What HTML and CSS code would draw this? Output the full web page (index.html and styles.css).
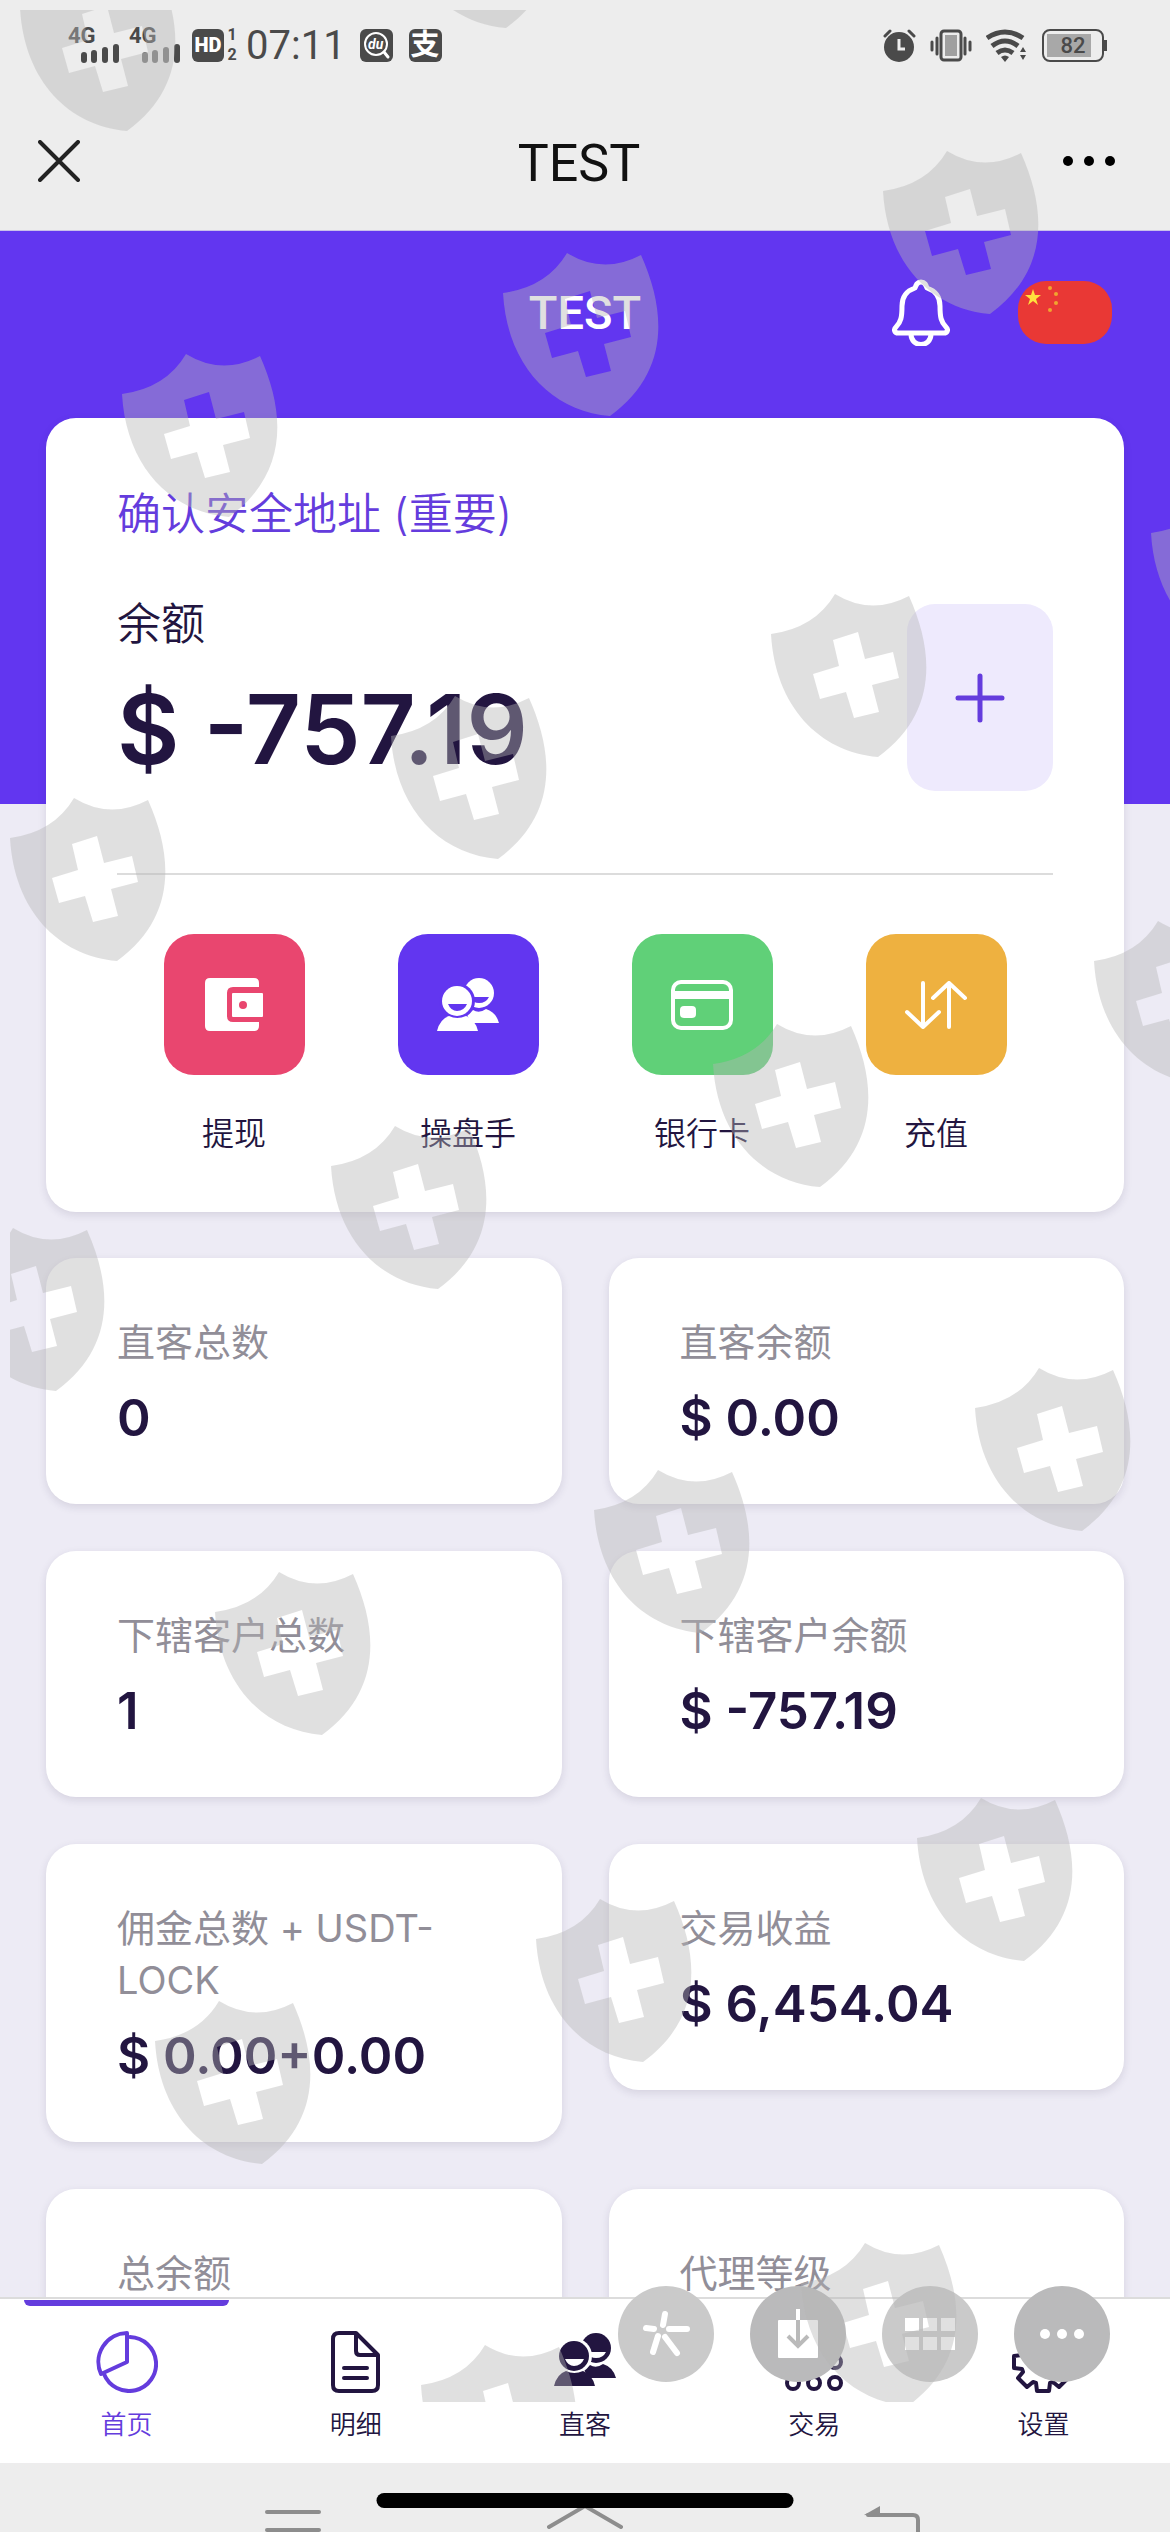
FILE: index.html
```html
<!DOCTYPE html>
<html lang="zh-CN">
<head>
    <meta charset="UTF-8">
    <meta name="viewport" content="width=device-width, initial-scale=1.0">
    <title>TEST</title>
    <link rel="stylesheet" href="styles.css">
</head>
<body>

    <!-- Shared shapes -->
    <svg class="defs" aria-hidden="true">
        <symbol id="people" viewBox="0 0 62 53">
            <circle cx="42" cy="15" r="15" fill="currentColor" />
            <path class="cut" d="M32 19H52Q49 25 42 25Q36 25 32 19Z" />
            <path fill="currentColor" d="M34 45Q32 40 30 37L36 32Q42 36 49 31Q59 34 62 45Z" />
            <circle class="cut" cx="20" cy="23" r="18" />
            <circle cx="20" cy="23" r="15" fill="currentColor" />
            <path class="cut" d="M11 26H30Q27 33 20 33Q14 33 11 26Z" />
            <path fill="currentColor" d="M0 53Q3 41 12 38Q20 42 29 38Q38 41 41 53Z" />
        </symbol>
        <symbol id="shield" viewBox="0 0 160 164">
            <path fill-rule="evenodd" d="M0 40Q44 34 64 0Q100 22 138 2C164 60 166 120 107 163C48 158 4 112 0 40ZM62 46L87 38L94 65L122 58L128 84L101 91L108 118L83 124L75 98L49 105L42 80L68 72Z" />
        </symbol>
    </svg>

    <div class="phone">
        <!-- System status bar -->
        <div class="status-bar">
            <div class="status-left">
                <span class="signal">4G
                    <svg width="39" height="19" viewBox="0 0 39 19"><path d="M3 11V16M13 9V16M24 6V16M35 3V16" /></svg>
                </span>
                <span class="signal">4G
                    <svg width="39" height="19" viewBox="0 0 39 19"><path class="weak" d="M3 11V16M13 9V16M24 6V16" /><path d="M35 3V16" /></svg>
                </span>
                <span class="hd">HD</span>
                <span class="sims"><b>1</b><b>2</b></span>
                <span class="time">07:11</span>
                <svg class="app-mark" width="33" height="33" viewBox="0 0 33 33">
                    <rect width="33" height="33" rx="6" fill="#4a4a4a" />
                    <circle cx="16" cy="15" r="11" fill="none" stroke="#fff" stroke-width="2" />
                    <path d="M24 23L28 28" stroke="#fff" stroke-width="3" stroke-linecap="round" />
                    <text x="8" y="20" font-size="14" font-style="italic" font-weight="700" fill="#fff">du</text>
                </svg>
                <span class="pay">支</span>
            </div>
            <div class="status-right">
                <svg width="33" height="33" viewBox="0 0 33 33">
                    <circle cx="16" cy="18" r="15" fill="#4a4a4a" />
                    <path d="M2 7L7 2M31 7L26 2" stroke="#4a4a4a" stroke-width="3" stroke-linecap="round" />
                    <path d="M16 10V20H22" fill="none" stroke="#ededed" stroke-width="3" />
                </svg>
                <svg width="42" height="33" viewBox="0 0 42 33">
                    <rect x="11" y="2" width="20" height="29" rx="3" fill="none" stroke="#4a4a4a" stroke-width="3" />
                    <rect x="15" y="6" width="12" height="21" fill="#a0a0a0" />
                    <path d="M7 9V25M2 13V21M35 9V25M40 13V21" stroke="#4a4a4a" stroke-width="3" stroke-linecap="round" />
                </svg>
                <svg width="42" height="33" viewBox="0 0 42 33">
                    <g fill="none" stroke="#4a4a4a" stroke-width="5">
                        <path d="M1 9Q19 -3 37 9" /><path d="M6 17Q19 7 32 17" /><path d="M11 24Q19 18 27 24" />
                    </g>
                    <path d="M15 28Q19 25 23 28L19 33ZM34 23L37 18L40 23ZM34 26L37 31L40 26Z" fill="#4a4a4a" />
                </svg>
                <span class="battery"><i></i><b>82</b></span>
            </div>
        </div>

        <!-- Browser title bar -->
        <div class="title-bar">
            <button class="icon-btn" aria-label="关闭">
                <svg width="42" height="42" viewBox="0 0 42 42"><path d="M2 2L40 40M40 2L2 40" stroke="#222" stroke-width="4" stroke-linecap="round" /></svg>
            </button>
            <h1>TEST</h1>
            <button class="icon-btn" aria-label="更多">
                <svg width="54" height="12" viewBox="0 0 54 12"><circle cx="6" cy="6" r="5" /><circle cx="27" cy="6" r="5" /><circle cx="48" cy="6" r="5" /></svg>
            </button>
        </div>

        <main>
            <header class="hero">
                <h2>TEST</h2>
                <div class="hero-actions">
                    <button class="icon-btn" aria-label="通知">
                        <svg width="58" height="67" viewBox="0 0 58 67" fill="none" stroke="#fff" stroke-width="5" stroke-linejoin="round">
                            <path d="M29 3C25 3 24 6 23 9C14 12 10 19 10 27C10 38 9 43 4 48C1 51 3 54 6 54H52C55 54 57 51 54 48C49 43 48 38 48 27C48 19 44 12 35 9C34 6 33 3 29 3Z" />
                            <path d="M19 55C19 69 39 69 39 55" />
                        </svg>
                    </button>
                    <button class="icon-btn flag" aria-label="简体中文">
                        <svg width="94" height="63" viewBox="0 0 94 63">
                            <rect width="94" height="63" rx="28" fill="#e93835" />
                            <path d="M15 8L17 14H23L18 18L20 24L15 20L10 24L12 18L7 14H13Z" fill="#ffe23d" />
                            <g fill="#f0a52f"><circle cx="32" cy="7" r="2" /><circle cx="38" cy="13" r="2" /><circle cx="38" cy="22" r="2" /><circle cx="32" cy="29" r="2" /></g>
                        </svg>
                    </button>
                </div>
            </header>

            <div class="content">
                <!-- Wallet card -->
                <section class="card wallet">
                    <a class="safe-link" href="#">确认安全地址 (重要)</a>
                    <div class="balance">
                        <div>
                            <p class="balance-label">余额</p>
                            <p class="amount">$ -757.19</p>
                        </div>
                        <button class="add" aria-label="添加">
                            <svg width="52" height="52" viewBox="0 0 52 52"><path d="M26 4V48M4 26H48" stroke="#643cdd" stroke-width="5" stroke-linecap="round" /></svg>
                        </button>
                    </div>
                    <div class="shortcuts">
                        <a href="#">
                            <span class="tile pink">
                                <svg width="58" height="53" viewBox="0 0 58 53">
                                    <path fill="#fff" d="M5 0H49Q54 0 54 5V9H28Q22 9 22 15V38Q22 44 28 44H54V48Q54 53 49 53H5Q0 53 0 48V5Q0 0 5 0Z" />
                                    <rect x="27" y="15" width="31" height="24" rx="1" fill="#fff" />
                                    <circle cx="38" cy="27" r="4" fill="#e9466f" />
                                </svg>
                            </span>
                            提现
                        </a>
                        <a href="#">
                            <span class="tile purple"><svg width="62" height="53"><use href="#people" /></svg></span>
                            操盘手
                        </a>
                        <a href="#">
                            <span class="tile green">
                                <svg width="62" height="50" viewBox="0 0 62 50">
                                    <rect x="2" y="2" width="58" height="46" rx="8" fill="none" stroke="#fff" stroke-width="4" />
                                    <path d="M2 15H60" stroke="#fff" stroke-width="8" />
                                    <rect x="9" y="26" width="16" height="12" rx="4" fill="#fff" />
                                </svg>
                            </span>
                            银行卡
                        </a>
                        <a href="#">
                            <span class="tile amber">
                                <svg width="62" height="48" viewBox="0 0 62 48" fill="none" stroke="#fff" stroke-width="4" stroke-linecap="round" stroke-linejoin="round">
                                    <path d="M18 2V46M2 31L18 46L34 31M44 46V2M28 17L44 2L60 17" />
                                </svg>
                            </span>
                            充值
                        </a>
                    </div>
                </section>

                <!-- Stats -->
                <section class="stats">
                    <div class="card stat"><p>直客总数</p><strong>0</strong></div>
                    <div class="card stat"><p>直客余额</p><strong>$ 0.00</strong></div>
                    <div class="card stat"><p>下辖客户总数</p><strong>1</strong></div>
                    <div class="card stat"><p>下辖客户余额</p><strong>$ -757.19</strong></div>
                    <div class="card stat"><p>佣金总数 + USDT-LOCK</p><strong>$ 0.00+0.00</strong></div>
                    <div class="card stat"><p>交易收益</p><strong>$ 6,454.04</strong></div>
                    <div class="card stat"><p>总余额</p></div>
                    <div class="card stat"><p>代理等级</p></div>
                </section>
            </div>
        </main>

        <!-- Bottom tabs -->
        <nav class="tabs">
            <a class="active" href="#">
                <svg width="62" height="62" viewBox="0 0 62 62"><path d="M31 2V31L5 43A29 29 0 0 1 31 2ZM34 6A27 27 0 1 1 8 43" /></svg>
                首页
            </a>
            <a href="#">
                <svg width="62" height="62" viewBox="0 0 62 62"><path d="M14 2H31L53 24V54Q53 60 47 60H14Q8 60 8 54V8Q8 2 14 2ZM31 3V20Q31 24 35 24H52M19 37H42M19 47H42" /></svg>
                明细
            </a>
            <a href="#">
                <svg class="solid" width="62" height="62" viewBox="0 0 62 62"><use href="#people" y="2" width="62" height="53" /></svg>
                直客
            </a>
            <a href="#">
                <svg width="62" height="62" viewBox="0 0 62 62">
                    <circle cx="10" cy="10" r="6" /><circle cx="31" cy="10" r="6" /><circle cx="52" cy="10" r="6" />
                    <circle cx="10" cy="31" r="6" /><circle cx="31" cy="31" r="6" /><circle cx="52" cy="31" r="6" />
                    <circle cx="10" cy="52" r="6" /><circle cx="31" cy="52" r="6" /><circle cx="52" cy="52" r="6" />
                </svg>
                交易
            </a>
            <a href="#">
                <svg width="62" height="62" viewBox="0 0 62 62">
                    <path d="M38 52L37 60H25L24 52L21 51L15 56L6 47L11 41L10 38L2 37V25L10 24L11 21L6 15L15 6L21 11L24 10L25 2H37L38 10L41 11L47 6L56 15L51 21L52 24L60 25V37L52 38L51 41L56 47L47 56L41 51Z" />
                    <circle cx="31" cy="31" r="9" />
                </svg>
                设置
            </a>
        </nav>

        <!-- System navigation -->
        <div class="system-nav">
            <svg width="56" height="30" viewBox="0 0 56 30"><path d="M2 9H54M2 27H54" /></svg>
            <svg width="76" height="30" viewBox="0 0 76 30"><path d="M2 24L38 3L74 24" /></svg>
            <svg width="86" height="30" viewBox="0 0 86 30"><path d="M34 12H79Q84 12 84 17V30" /><path class="head" d="M30 12L46 3V13Z" /></svg>
            <span class="home-indicator"></span>
        </div>

        <!-- Floating toolbar -->
        <div class="float-tools">
            <button aria-label="收藏">
                <svg width="96" height="96" viewBox="0 0 96 96"><path d="M47 28L45 39M69 43L51 43M28 42L36 43M35 66L40 50M59 67L47 51" stroke="#fff" stroke-width="6" stroke-linecap="round" /></svg>
            </button>
            <button class="dark" aria-label="下载">
                <svg width="96" height="96" viewBox="0 0 96 96" fill="none" stroke-width="4">
                    <rect x="28" y="34" width="40" height="38" rx="1" fill="#fff" />
                    <path d="M48 23V34" stroke="#fff" />
                    <path d="M48 34V60M38 50L48 60L58 50" stroke="#bababa" />
                </svg>
            </button>
            <button aria-label="宫格">
                <svg width="96" height="96" viewBox="0 0 96 96"><path fill="#fff" d="M23 32H37V45H23ZM41 32H55V45H41ZM59 32H73V45H59ZM23 51H37V64H23ZM41 51H55V64H41ZM59 51H73V64H59Z" /></svg>
            </button>
            <button class="dark" aria-label="更多工具">
                <svg width="96" height="96" viewBox="0 0 96 96" fill="#fff"><circle cx="31" cy="48" r="5" /><circle cx="48" cy="48" r="5" /><circle cx="65" cy="48" r="5" /></svg>
            </button>
        </div>

        <!-- Shield watermark over the whole screen -->
        <svg class="watermark" aria-hidden="true">
            <g transform="translate(-10 -10)">
                <use href="#shield" x="20" y="-32" width="160" height="164" />
                <use href="#shield" x="399" y="-135" width="160" height="164" />
                <use href="#shield" x="883" y="151" width="160" height="164" />
                <use href="#shield" x="503" y="253" width="160" height="164" />
                <use href="#shield" x="122" y="354" width="160" height="164" />
                <use href="#shield" x="1151" y="493" width="160" height="164" />
                <use href="#shield" x="771" y="594" width="160" height="164" />
                <use href="#shield" x="391" y="696" width="160" height="164" />
                <use href="#shield" x="10" y="798" width="160" height="164" />
                <use href="#shield" x="1094" y="921" width="160" height="164" />
                <use href="#shield" x="713" y="1024" width="160" height="164" />
                <use href="#shield" x="331" y="1126" width="160" height="164" />
                <use href="#shield" x="-51" y="1228" width="160" height="164" />
                <use href="#shield" x="975" y="1368" width="160" height="164" />
                <use href="#shield" x="594" y="1470" width="160" height="164" />
                <use href="#shield" x="215" y="1572" width="160" height="164" />
                <use href="#shield" x="917" y="1798" width="160" height="164" />
                <use href="#shield" x="536" y="1899" width="160" height="164" />
                <use href="#shield" x="155" y="2001" width="160" height="164" />
                <use href="#shield" x="801" y="2243" width="160" height="164" />
                <use href="#shield" x="421" y="2345" width="160" height="164" />
            </g>
        </svg>
    </div>

</body>
</html>
```
FILE: styles.css
```css
/* Global styling */
* {
    box-sizing: border-box;
}

body {
    margin: 0;
    font-family: Inter, "Noto Sans CJK SC", sans-serif;
    color: #221540;
    background-color: #ededed;
}

h1, h2, p {
    margin: 0;
}

a {
    color: inherit;
    text-decoration: none;
}

button {
    border: none;
    padding: 0;
    background: none;
    cursor: pointer;
}

svg {
    display: block;
}

.defs {
    position: absolute;
    width: 0;
    height: 0;
}

/* Screen column: bars stay put, main area is cut off */
.phone {
    position: relative;
    display: flex;
    flex-direction: column;
    height: 100vh;
    overflow: hidden;
}

main {
    flex: 1;
    min-height: 0;
    overflow: hidden;
    background-color: #edebf5;
}

/* Status bar */
.status-bar {
    display: flex;
    justify-content: space-between;
    align-items: center;
    height: 92px;
    padding: 0 62px 2px 68px;
    font-family: Roboto, "Noto Sans CJK SC", sans-serif;
    color: #4a4a4a;
}

.status-left,
.status-right {
    display: flex;
    align-items: center;
}

.status-right {
    gap: 14px;
}

.signal {
    width: 52px;
    margin-right: 9px;
    font-size: 22px;
    font-weight: 700;
    line-height: 16px;
}

.signal svg {
    margin-left: auto;
}

.signal path {
    stroke: #4a4a4a;
    stroke-width: 6;
    stroke-linecap: round;
}

.signal .weak {
    stroke: #777;
}

.hd {
    width: 32px;
    margin-left: 2px;
    border-radius: 6px;
    background-color: #4a4a4a;
    color: #fff;
    font-size: 20px;
    font-weight: 900;
    line-height: 33px;
    text-align: center;
}

.sims {
    display: flex;
    flex-direction: column;
    width: 12px;
    margin: 0 8px 0 2px;
    font-size: 16px;
    line-height: 20px;
    text-align: center;
}

.time {
    margin-right: 14px;
    font-size: 40px;
}

.pay {
    width: 33px;
    margin-left: 16px;
    border-radius: 6px;
    background-color: #4a4a4a;
    color: #fff;
    font-size: 29px;
    font-weight: 700;
    line-height: 33px;
    text-align: center;
}

.battery {
    position: relative;
    width: 62px;
    height: 33px;
    margin-right: 4px;
    padding: 3px;
    border: 2px solid #4a4a4a;
    border-radius: 8px;
}

.battery::after {
    content: "";
    position: absolute;
    top: 9px;
    right: -5px;
    width: 3px;
    height: 11px;
    background-color: #4a4a4a;
}

.battery i {
    display: block;
    width: 44px;
    height: 23px;
    background-color: #a8a8a8;
}

.battery b {
    position: absolute;
    inset: 0;
    font-size: 22px;
    font-weight: 500;
    line-height: 30px;
    text-align: center;
}

/* Title bar */
.title-bar {
    display: flex;
    justify-content: space-between;
    align-items: center;
    height: 139px;
    padding: 0 54px 0 38px;
    border-bottom: 1px solid #c9c0ea;
}

.title-bar .icon-btn {
    width: 54px;
}

.title-bar h1 {
    padding: 4px 0 0 4px;
    font-family: Roboto, sans-serif;
    font-size: 52px;
    font-weight: 400;
    color: #111;
}

/* Purple hero */
.hero {
    display: grid;
    grid-template-columns: 1fr auto 1fr;
    align-items: center;
    padding: 48px 58px 458px;
    background-color: #6236f0;
}

.hero h2 {
    grid-column: 2;
    font-family: Roboto, sans-serif;
    font-size: 47px;
    font-weight: 500;
    line-height: 64px;
    color: #fff;
}

.hero-actions {
    display: flex;
    justify-content: flex-end;
    align-items: center;
    gap: 68px;
}

.content {
    margin-top: -386px;
    padding: 0 46px;
}

.card {
    border-radius: 30px;
    background-color: #fff;
    box-shadow: 0 3px 8px rgba(40, 30, 70, 0.12);
}

/* Wallet card */
.wallet {
    padding: 64px 71px 58px;
}

.safe-link {
    display: block;
    font-size: 44px;
    font-weight: 350;
    line-height: 64px;
    color: #643cdd;
}

.balance {
    display: flex;
    justify-content: space-between;
    margin-top: 58px;
    padding-bottom: 82px;
    border-bottom: 2px solid #dcdcdc;
}

.balance-label {
    font-size: 44px;
    font-weight: 350;
    line-height: 40px;
}

.amount {
    margin-top: 29px;
    font-size: 96px;
    font-weight: 600;
    line-height: 112px;
}

.add {
    display: flex;
    justify-content: center;
    align-items: center;
    width: 146px;
    height: 187px;
    border-radius: 28px;
    background-color: #eeeafd;
}

.shortcuts {
    display: grid;
    grid-template-columns: repeat(4, 1fr);
    margin-top: 59px;
}

.shortcuts a {
    display: flex;
    flex-direction: column;
    align-items: center;
    gap: 39px;
    font-size: 32px;
    font-weight: 350;
    line-height: 40px;
}

.tile {
    display: flex;
    justify-content: center;
    align-items: center;
    width: 141px;
    height: 141px;
    border-radius: 30px;
    color: #fff;
}

.pink {
    background-color: #e9466f;
}

.purple {
    background-color: #6236f0;
}

.green {
    background-color: #60d078;
}

.amber {
    background-color: #eeb140;
}

.cut {
    fill: var(--cut, #6236f0);
}

/* Stats */
.stats {
    display: grid;
    grid-template-columns: 1fr 1fr;
    align-items: start;
    gap: 47px;
    margin-top: 46px;
}

.stat {
    padding: 58px 71px;
}

.stat p {
    font-size: 38px;
    line-height: 52px;
    color: #918e98;
}

.stat strong {
    display: block;
    margin-top: 22px;
    font-size: 51px;
    font-weight: 600;
    line-height: 56px;
}

/* Bottom tabs */
.tabs {
    display: grid;
    grid-template-columns: repeat(5, 1fr);
    height: 166px;
    padding: 0 12px;
    border-top: 2px solid #dcdcdc;
    background-color: #fff;
}

.tabs a {
    --cut: #fff;
    position: relative;
    display: flex;
    flex-direction: column;
    align-items: center;
    gap: 16px;
    padding-top: 32px;
    font-size: 26px;
    font-weight: 350;
    line-height: 32px;
}

.tabs svg {
    fill: none;
    stroke: currentColor;
    stroke-width: 4;
    stroke-linecap: round;
    stroke-linejoin: round;
}

.tabs .solid {
    stroke: none;
}

.tabs .active {
    color: #643cdd;
}

.tabs .active::before {
    content: "";
    position: absolute;
    top: 1px;
    left: 12px;
    right: 12px;
    height: 6px;
    border-radius: 0 0 6px 6px;
    background-color: #643cdd;
}

/* System navigation */
.system-nav {
    position: relative;
    display: grid;
    grid-template-columns: repeat(3, 1fr);
    justify-items: center;
    height: 69px;
    padding: 40px 147px 0;
    overflow: hidden;
}

.system-nav path {
    fill: none;
    stroke: #8d8d8d;
    stroke-width: 4;
    stroke-linecap: round;
}

.system-nav .head {
    fill: #8d8d8d;
    stroke: none;
}

.home-indicator {
    position: absolute;
    top: 30px;
    left: 50%;
    width: 417px;
    height: 15px;
    border-radius: 8px;
    background-color: #000;
    transform: translateX(-50%);
}

/* Floating toolbar */
.float-tools {
    position: absolute;
    right: 60px;
    bottom: 150px;
    display: flex;
    gap: 36px;
}

.float-tools button {
    border-radius: 50%;
    background-color: #cacaca;
}

.float-tools .dark {
    background-color: #bababb;
}

/* Watermark */
.watermark {
    position: absolute;
    top: 10px;
    left: 10px;
    width: calc(100% - 10px);
    height: calc(100% - 140px);
    overflow: hidden;
    fill: rgba(181, 181, 181, 0.42);
    pointer-events: none;
}
```
